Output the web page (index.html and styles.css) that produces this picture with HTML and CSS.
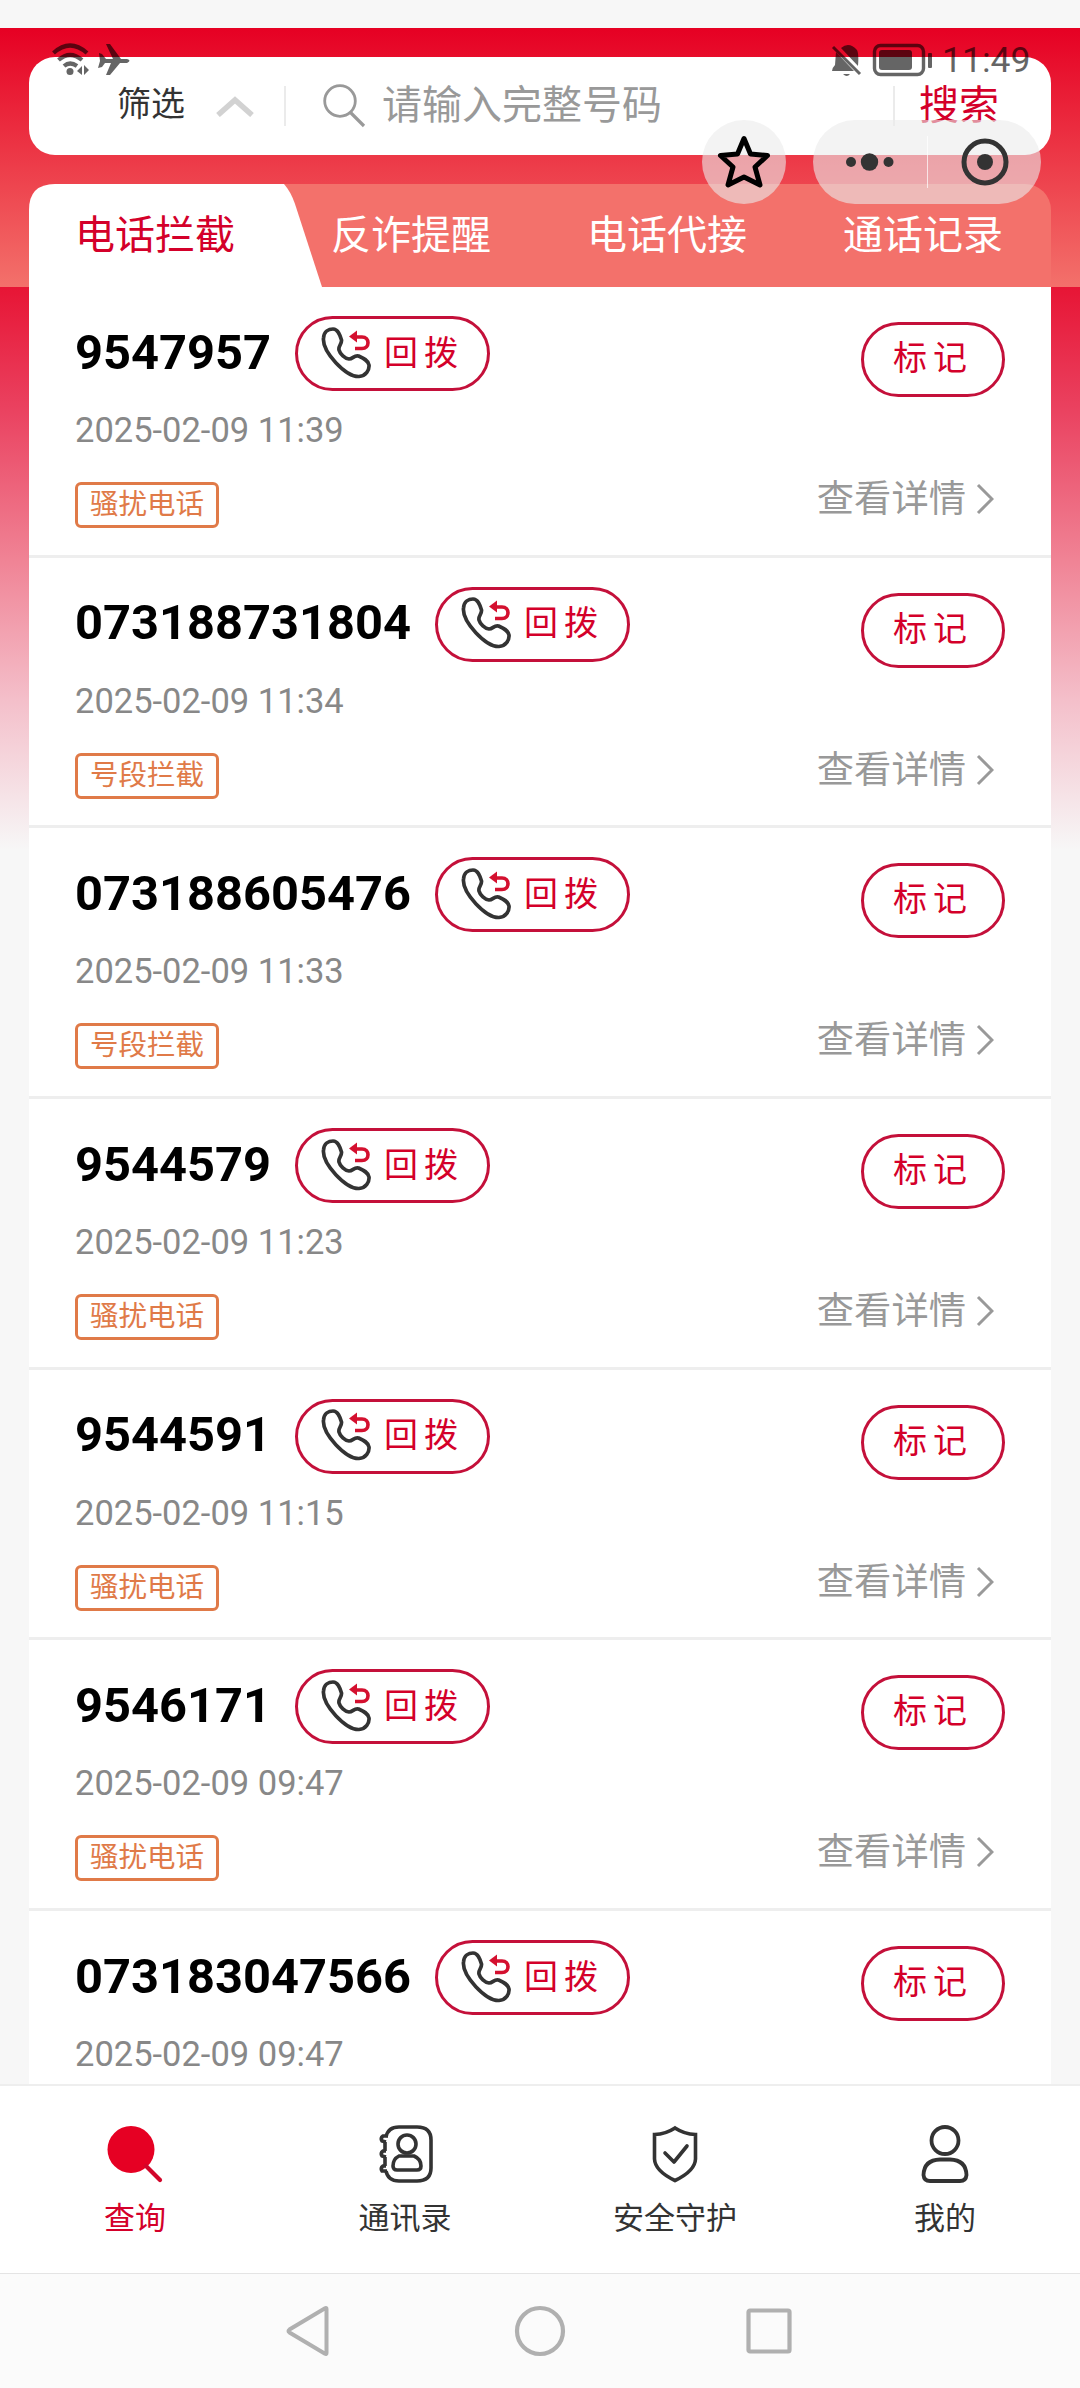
FILE: index.html
```html
<!DOCTYPE html>
<html lang="zh-CN">
<head>
<meta charset="utf-8">
<title>电话拦截</title>
<link rel="stylesheet" href="styles.css">
</head>
<body>
<svg class="defs" width="0" height="0">
  <symbol id="phone" viewBox="0 0 50 52">
    <path d="M2.500 11C3 4 8 2 12 2c5 0 7 6 8.500 11 .5 4-3.500 6-2.500 10 1 4 6 8.500 10 9 4 0 5-4 9.500-3C42 31 47 33 48 38c.5 5-3 11-10 11.500C25 50 1 25 2.500 11Z" fill="none" stroke="#333" stroke-width="3.700" stroke-linejoin="round"/>
    <path d="M34 10h7c8 0 8 11.500 0 11.500h-7" fill="none" stroke="#d4102f" stroke-width="3.600"/>
    <path d="M28 9.500l8-6v12z" fill="#d4102f"/>
  </symbol>
  <symbol id="chev" viewBox="0 0 18 32"><path d="M2 2l14 14L2 30" fill="none" stroke="#999" stroke-width="3"/></symbol>
</svg>
<div class="screen">
  <div class="strip"></div>
  <header class="head">
    <div class="search">
      <span class="filter">筛选</span>
      <svg class="caret" width="38" height="21" viewBox="0 0 38 21"><path d="M2 19L19 4l17 15" fill="none" stroke="#d2d2d2" stroke-width="5.500"/></svg>
      <i class="bar"></i>
      <svg class="glass" width="43" height="44" viewBox="0 0 43 44"><circle cx="17" cy="17" r="15.300" fill="none" stroke="#999" stroke-width="2.800"/><path d="M27 28l14 14" stroke="#999" stroke-width="3.200"/></svg>
      <span class="hint">请输入完整号码</span>
      <i class="bar"></i>
      <span class="go">搜索</span>
    </div>
    <nav class="tabs">
      <svg class="tab-shape" width="294" height="103" viewBox="0 0 294 103"><path d="M0 103V26Q0 0 26 0H255Q262 8 266 20L293 103Z" fill="#fff"/></svg>
      <span class="tab on">电话拦截</span><span class="tab">反诈提醒</span><span class="tab">电话代接</span><span class="tab">通话记录</span>
    </nav>
  </header>
  <main class="list" id="list"></main>
  <nav class="tabbar">
    <div class="item active"><svg width="58" height="58" viewBox="0 0 58 58"><circle cx="25" cy="24.500" r="23.500" fill="#e60023"/><path d="M40 41l14 14" stroke="#d2062b" stroke-width="4.200" stroke-linecap="round"/></svg><span>查询</span></div>
    <div class="item"><svg width="58" height="58" viewBox="0 0 58 58" fill="none" stroke="#333" stroke-width="3.600"><path d="M10 12Q12 2 23 2H41Q55 2 55 15V43Q55 56 41 56H23Q12 56 10 46M9 17v9M9 32v9"/><path d="M12 11H7q-3 2-1 5l4 1M10 26H7q-3 2-1 5l4 1M10 41H7q-3 2-1 5l5 0"/><circle cx="31" cy="19" r="9"/><path d="M23 31h15q7 3 7 10 0 4-4 4H21q-4 0-4-4 0-7 6-10Z"/></svg><span>通讯录</span></div>
    <div class="item"><svg width="58" height="58" viewBox="0 0 58 58" fill="none" stroke="#333" stroke-width="3.600"><path d="M29 3Q20 9 8.500 9.500V34Q9 46 29 55.500 49 46 49.500 34V9.500Q38 9 29 3Z"/><path d="M19 28l9 9 13-16" stroke-linecap="round" stroke-linejoin="round"/></svg><span>安全守护</span></div>
    <div class="item"><svg width="58" height="58" viewBox="0 0 58 58" fill="none" stroke="#333" stroke-width="3.800"><circle cx="29" cy="15.500" r="13.500"/><path d="M24 34.500H34Q50 35 50.500 50 50 56 44 56H14Q8 56 7.500 50 8 35 24 34.500Z"/></svg><span>我的</span></div>
  </nav>
  <footer class="sysnav">
    <svg width="44" height="52" viewBox="0 0 44 52"><path d="M40.500 4v44q0 1.500-1.500.8L3.500 27.500q-2-1.500 0-3L39 3.200q1.500-.7 1.500.8Z" fill="none" stroke="#b0b0b0" stroke-width="4"/></svg>
    <svg class="home" width="52" height="52" viewBox="0 0 52 52"><circle cx="26" cy="26" r="23" fill="none" stroke="#b0b0b0" stroke-width="4.200"/></svg>
    <svg width="46" height="46" viewBox="0 0 46 46"><rect x="2.500" y="2.500" width="41" height="41" rx="1.500" fill="none" stroke="#b0b0b0" stroke-width="4.200"/></svg>
  </footer>
</div>

<div class="status status-left">
  <svg width="84" height="40" viewBox="0 0 84 40"><g fill="none" stroke="#000" stroke-width="4.200"><path d="M2.500 13Q19-2 36 13"/><path d="M7.500 20Q19 10 31 20"/><path d="M13 26Q19 21 26 26"/></g><circle cx="19" cy="31.500" r="3.500"/><path d="M26 31l5-5v9zM33 25v10l5-5z"/><path d="M48 13l3 1 4 5h7L55 4h4l11 15h6q5 1.500 0 4h-7L59 35h-4l5-12h-6l-3 4-4 1 2-7z"/></svg>
</div>
<div class="status status-right">
  <svg width="104" height="36" viewBox="0 0 104 36"><path d="M5 10l18 19H1q0-3 3-6zM10 6q8-7 16 2 2 4 1 16zM12 32h7q-3 4-7 0z"/><path d="M2 5l27 27" stroke="#000" stroke-width="3"/><rect x="43.500" y="3.500" width="49" height="29" rx="6" fill="none" stroke="#000" stroke-width="3.400"/><rect x="48" y="8" width="33" height="20" rx="3"/><rect x="97" y="11" width="4" height="15" rx="1"/></svg>
  <span class="clock">11:49</span>
</div>
<div class="star"><svg width="54" height="54" viewBox="0 0 54 54"><path d="M27 3.500L33.500 19 50.500 20.500 38 32 43 50 27 42 11 50 16 32 3.500 20.500 20.500 19Z" fill="none" stroke="#000" stroke-width="5" stroke-linejoin="round"/></svg></div>
<div class="capsule">
  <svg class="dots" width="48" height="20" viewBox="0 0 48 20" fill="#333"><circle cx="5" cy="10" r="5"/><circle cx="23.500" cy="10" r="8.700"/><circle cx="42.500" cy="10" r="5"/></svg>
  <i></i>
  <svg width="48" height="48" viewBox="0 0 48 48"><circle cx="24" cy="24" r="21" fill="none" stroke="#333" stroke-width="5"/><circle cx="24" cy="24" r="8" fill="#333"/></svg>
</div>
<script src="list.js"></script>
</body>
</html>
```
FILE: styles.css
```css
* { box-sizing: border-box; }
body { margin: 0; background: #f7f7f7; font-family: Roboto, "Noto Sans CJK SC", sans-serif; }
.defs { position: absolute; }
svg { display: block; flex: none; }
.screen { width: 1080px; height: 2388px; display: flex; flex-direction: column; overflow: hidden; background: linear-gradient(#e60023 28px, #e71535 287px, #ea4260 410px, #f08395 560px, #f4bfca 700px, #f7f7f7 850px); }
.strip { height: 28px; flex: none; background: #f7f7f7; }
.head { height: 259px; flex: none; padding: 29px 29px 0; background: linear-gradient(#e60023, #f3716b); }
.search { height: 98px; border-radius: 26px; background: #fff; display: flex; align-items: center; padding: 0 52px 0 88px; white-space: nowrap; }
.filter { font-size: 34px; line-height: 50px; color: #333; margin-bottom: 4px; }
.caret { margin: 0 30px 0 31px; }
.bar { width: 2px; height: 40px; background: #ebebeb; }
.glass { margin: 0 16px 0 37px; }
.hint { font-size: 40px; line-height: 58px; color: #999; width: 514px; }
.go { font-size: 40px; line-height: 58px; color: #d4002a; margin-left: 24px; }
.tabs { position: relative; margin-top: 29px; height: 103px; border-radius: 26px 26px 0 0; background: #f3716b; display: grid; grid-template-columns: repeat(4, 256px); }
.tab-shape { position: absolute; left: 0; top: 0; }
.tab { position: relative; text-align: center; font-size: 40px; line-height: 103px; color: #fff; padding-right: 4px; }
.tab.on { color: #d4002a; }
.list { flex: 1; min-height: 0; overflow: hidden; margin: 0 29px; background: #fff; }
.row { height: 270.7px; border-bottom: 3px solid #eee; padding: 29px 46px 0; display: flex; justify-content: space-between; }
.info { display: flex; flex-direction: column; align-items: flex-start; }
.title { display: flex; height: 75px; align-items: center; gap: 24px; }
.num { font-size: 48.800px; line-height: 72px; font-weight: 700; color: #000; margin-top: -2px; }
.call { width: 195px; height: 75px; border: 3px solid #c4103a; border-radius: 38px; display: flex; align-items: center; padding-left: 23px; color: #d4002a; font-size: 34px; letter-spacing: 6px; }
.call svg { width: 50px; height: 52px; margin: -2px 13px 0 0; }
.call span { margin-top: -7px; }
.date { font-size: 34.500px; line-height: 48px; margin-top: 15px; color: #888; }
.tag { width: 144px; height: 46px; margin-top: 28px; border: 3px solid #e07a48; border-radius: 6px; color: #e07a48; font-size: 28.500px; line-height: 39px; text-align: center; }
.side { display: flex; flex-direction: column; align-items: flex-end; padding-top: 6px; }
.mark { width: 144px; height: 75px; border: 3px solid #c4103a; border-radius: 38px; color: #d4002a; font-size: 34px; letter-spacing: 6px; line-height: 67px; text-align: center; }
.more { display: flex; align-items: center; gap: 10px; margin: 75px 11px 0 0; font-size: 37.300px; line-height: 54px; color: #999; }
.more svg { width: 18px; height: 32px; }
.tabbar { height: 189px; flex: none; background: #fff; border-top: 2px solid #eee; display: grid; grid-template-columns: repeat(4, 1fr); }
.item { display: flex; flex-direction: column; align-items: center; padding-top: 39px; color: #333; font-size: 31px; line-height: 44px; }
.item span { margin-top: 14px; }
.item.active { color: #d4002a; }
.sysnav { height: 115px; flex: none; background: #fbfbfb; border-top: 1px solid #e4e4e4; display: flex; align-items: center; justify-content: space-between; padding: 0 288px 0 286px; }
.home { margin-left: 4px; }
.status { position: absolute; display: flex; align-items: center; opacity: .6; }
.status-left { left: 51px; top: 40px; }
.status-right { left: 831px; top: 42px; gap: 7px; }
.clock { font-size: 35.500px; line-height: 36px; }
.star { position: absolute; left: 702px; top: 120px; width: 84px; height: 84px; border-radius: 50%; background: rgba(235, 235, 235, .6); display: grid; place-items: center; }
.capsule { position: absolute; left: 813px; top: 120px; width: 228px; height: 84px; border-radius: 42px; background: rgba(235, 235, 235, .6); display: flex; align-items: center; padding-left: 33px; }
.capsule i { width: 1px; height: 52px; background: rgba(255, 255, 255, .7); margin: 0 33px; }
```
FILE: list.js
```js
const calls = [
  ["9547957", "11:39", "骚扰电话"],
  ["073188731804", "11:34", "号段拦截"],
  ["073188605476", "11:33", "号段拦截"],
  ["9544579", "11:23", "骚扰电话"],
  ["9544591", "11:15", "骚扰电话"],
  ["9546171", "09:47", "骚扰电话"],
  ["073183047566", "09:47"],
];
document.getElementById("list").innerHTML = calls.map(([num, time, tag]) => `
  <section class="row">
    <div class="info">
      <div class="title"><span class="num">${num}</span><div class="call"><svg><use href="#phone"/></svg><span>回拨</span></div></div>
      <div class="date">2025-02-09 ${time}</div>
      ${tag ? `<div class="tag">${tag}</div>` : ""}
    </div>
    <div class="side">
      <div class="mark">标记</div>
      ${tag ? `<div class="more">查看详情<svg><use href="#chev"/></svg></div>` : ""}
    </div>
  </section>`).join("");
```
